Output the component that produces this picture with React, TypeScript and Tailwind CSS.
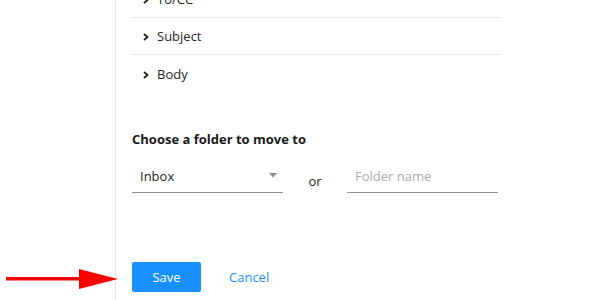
import * as React from "react";

const rows = ["To/CC", "Subject", "Body"];

function Chevron() {
  return (
    <svg width="6" height="8" viewBox="0 0 6 8" className="shrink-0">
      <polyline points="1,1 4.5,4 1,7" fill="none" stroke="#1f1f1f" strokeWidth="1.8" />
    </svg>
  );
}

export default function App() {
  return (
    <div className="relative flex h-[300px] w-[600px] overflow-hidden bg-white font-['Open_Sans',sans-serif] text-[13px] text-[#262626]">
      <div className="w-[116px] shrink-0 border-r border-[#e4e4e4]" />

      <div className="ml-4 flex w-[368px] flex-col">
        <div className="mt-[-19px]">
          {rows.map((r, i) => (
            <div
              key={r}
              className={
                "flex h-[37px] items-center gap-[8px] pl-[11px] pt-[2px] " +
                (i < rows.length - 1 ? "border-b border-[#e8e8e8]" : "")
              }
            >
              <Chevron />
              <span>{r}</span>
            </div>
          ))}
        </div>

        <h3 className="mt-[37px] h-5 text-[13px] font-bold leading-5 text-[#1a1a1a]">Choose a folder to move to</h3>

        <div className="mt-[12px] flex items-end">
          <div className="flex h-[32px] w-[151px] items-center justify-between border-b border-[#8f8f8f] pl-2 pr-[6px] pt-[1px]">
            <span>Inbox</span>
            <svg width="8" height="5" viewBox="0 0 8 5" className="mb-[4px]">
              <polygon points="0,0 8,0 4,4.5" fill="#8c8c8c" />
            </svg>
          </div>
          <div className="w-[64px] pb-[2px] text-center leading-5">or</div>
          <div className="flex h-[32px] w-[151px] items-center border-b border-[#8f8f8f] pl-2">
            <span className="text-[#aaaaaa]">Folder name</span>
          </div>
        </div>

        <div className="mt-[69px] flex items-center">
          <button className="h-[30px] w-[69px] rounded-[2px] bg-[#1890ff] pt-[1px] text-white">Save</button>
          <button className="ml-[28px] pt-[2px] text-[#1890ff]">Cancel</button>
        </div>
      </div>

      <svg className="absolute left-0 top-[266px]" width="120" height="26" viewBox="0 0 120 26">
        <rect x="6" y="11" width="76" height="3.5" fill="#ff0000" />
        <polygon points="79,3 118,13 79,23" fill="#ff0000" />
      </svg>
    </div>
  );
}
